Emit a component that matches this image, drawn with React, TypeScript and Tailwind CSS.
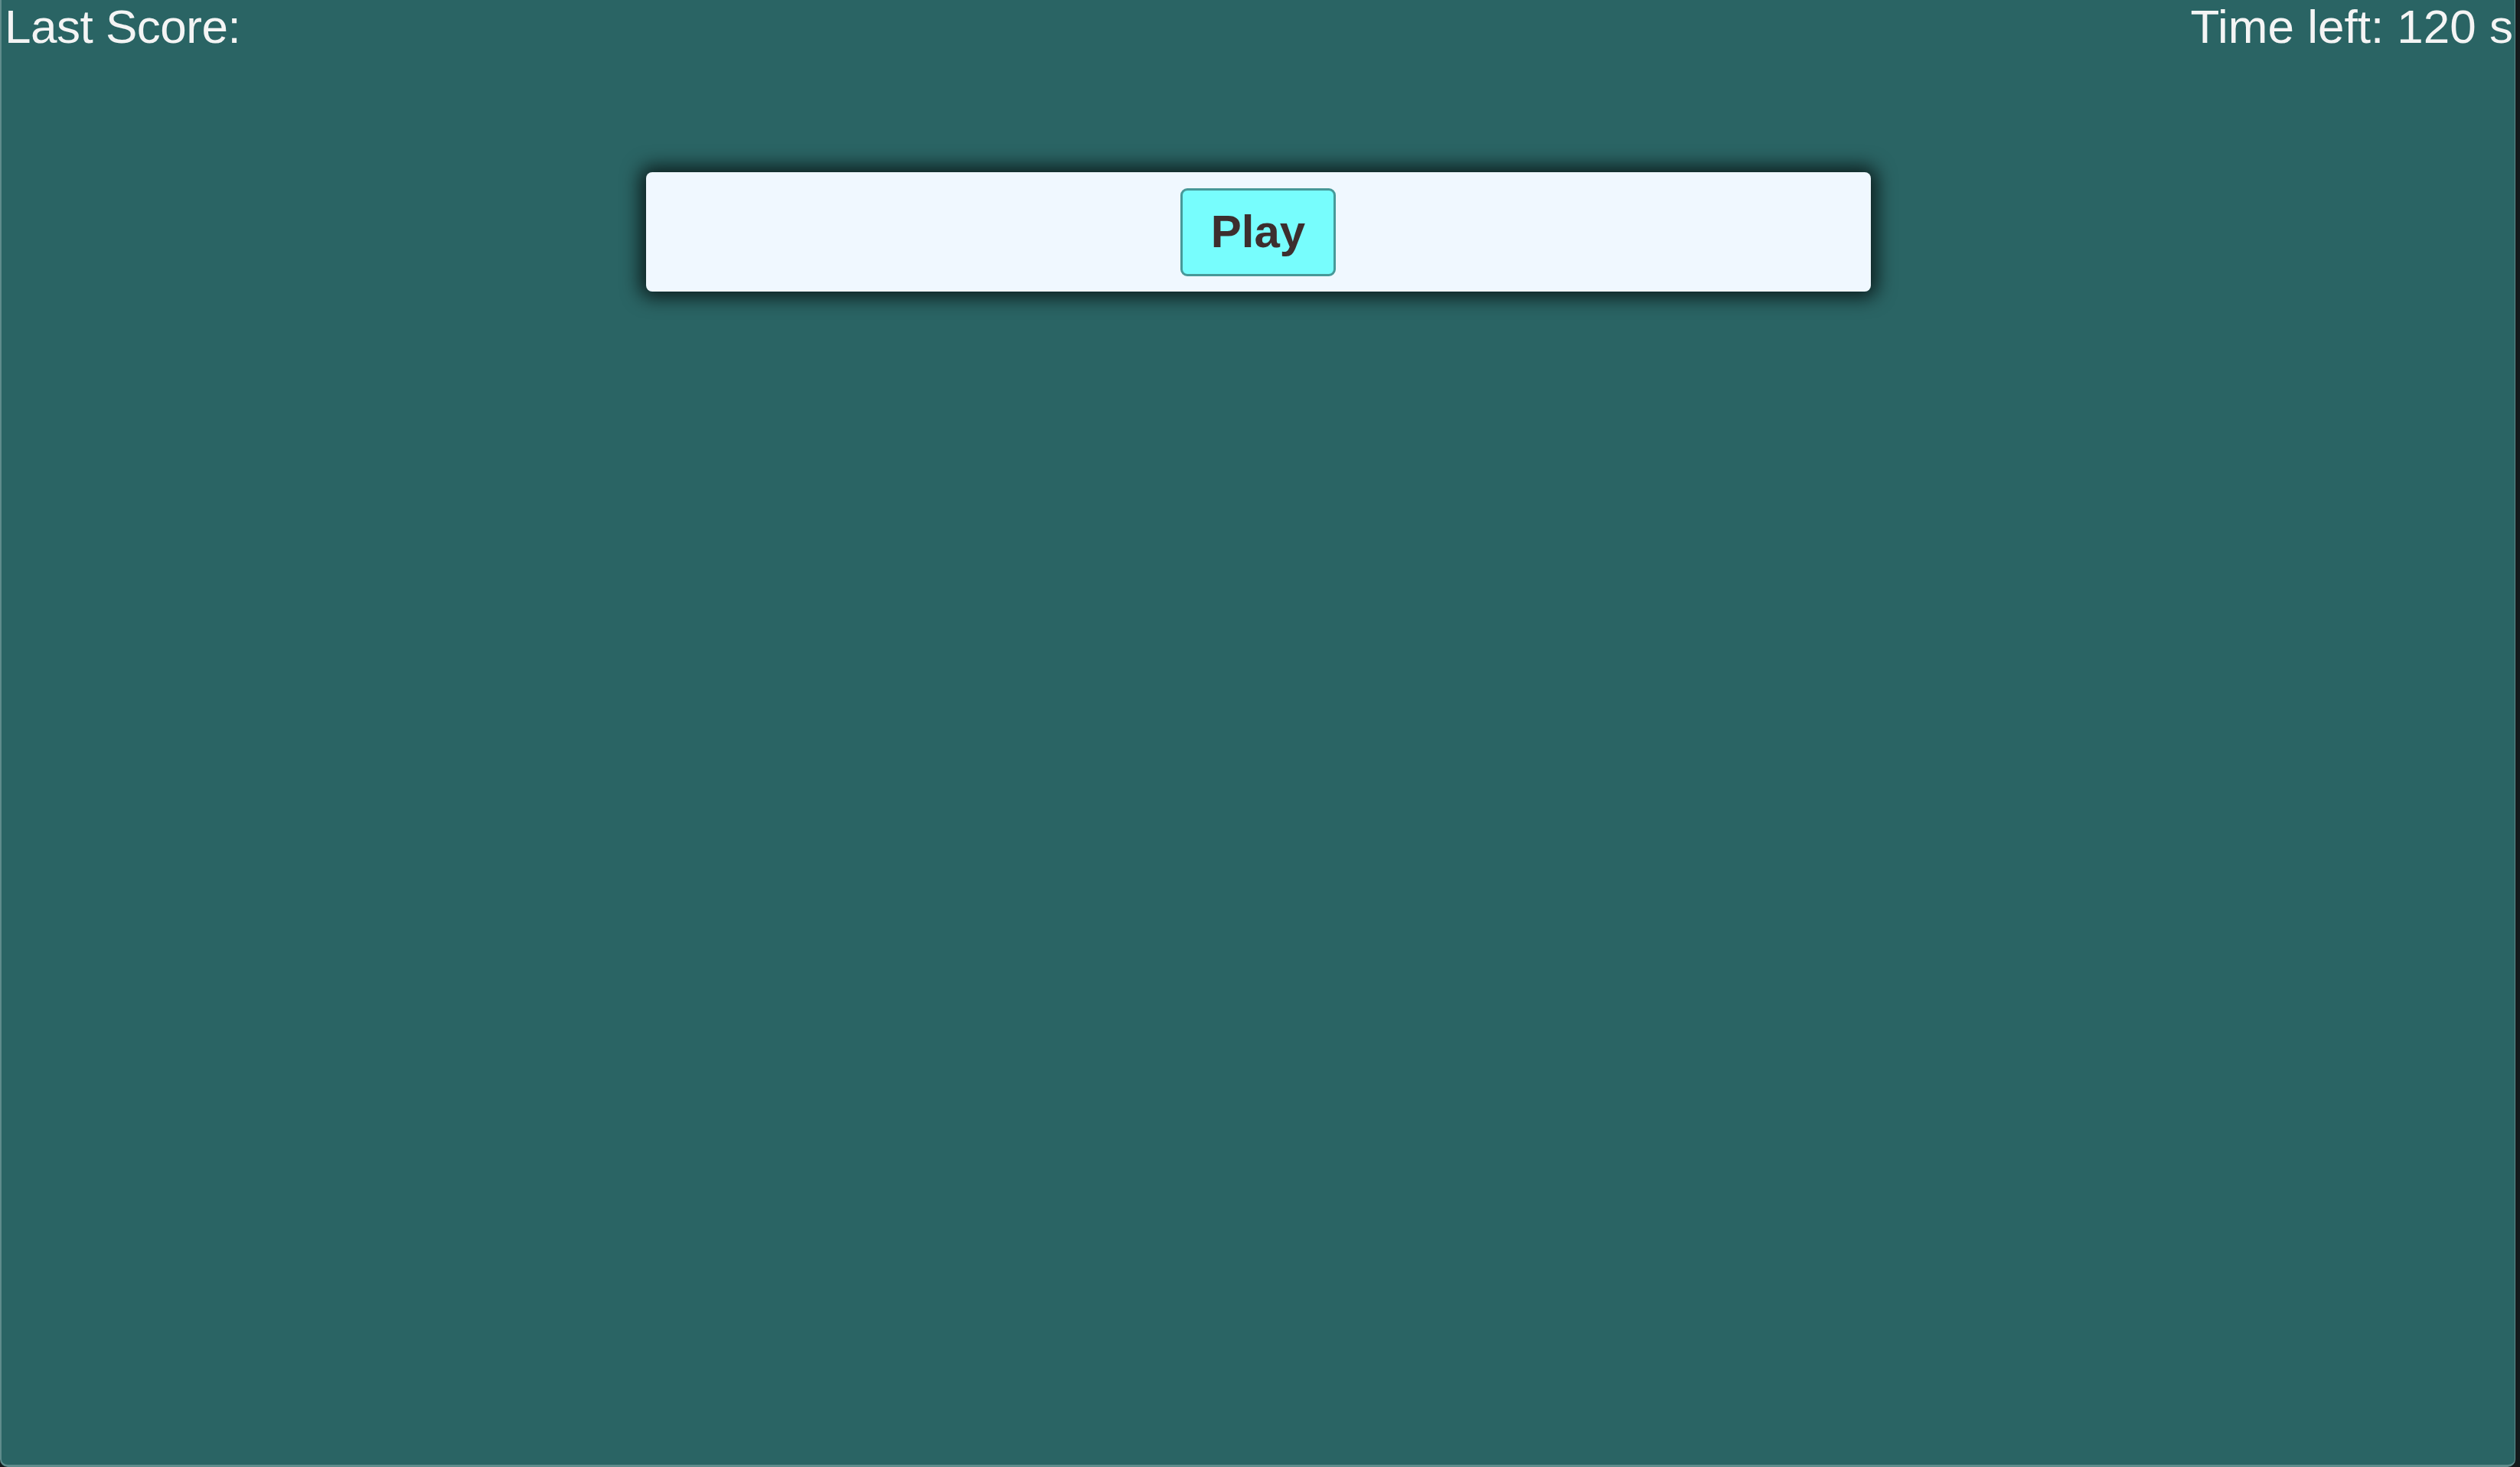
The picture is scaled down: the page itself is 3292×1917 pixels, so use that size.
import React from "react";

export default function App() {
  return (
    <div className="flex h-[1917px] w-[3292px] bg-[#141a1c]" style={{ fontFamily: '"Liberation Sans", Arial, sans-serif' }}>
      <div className="flex h-full w-[3286px] flex-col rounded-b-[10px] border-b-[3px] border-l-[2px] border-r-[1px] border-[#5f8c8c] bg-[#2a6464]">
        <div className="flex items-start justify-between pl-[4px] pr-[2px] pt-[4px] text-[62px] leading-none text-[#f4f4f4]">
          <span className="tracking-[-0.5px]">Last Score:</span>
          <span>Time left: 120 s</span>
        </div>
        <div className="mx-auto mt-[159px] flex h-[156px] w-[1600px] items-center justify-center rounded-[8px] bg-[#f0f8ff] shadow-[0_0_24px_8px_rgba(0,0,0,0.7)]">
          <button className="flex h-[115px] w-[203px] items-center justify-center rounded-[9px] border-[3px] border-[#479999] bg-[#77fdfd] text-[60px] font-bold leading-none text-[#3d2e2e]">
            Play
          </button>
        </div>
      </div>
    </div>
  );
}
